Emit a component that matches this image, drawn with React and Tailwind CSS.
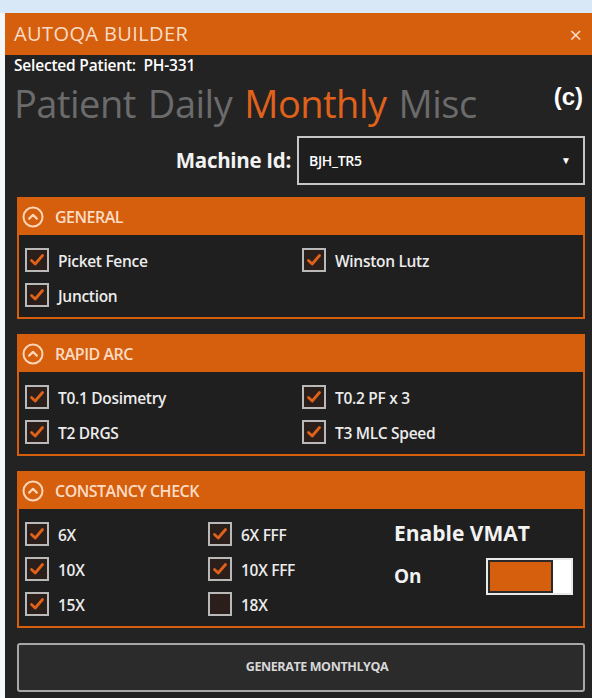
import React from "react";

const ORANGE = "bg-[#d65f0e]";

// small up-chevron in a ring, used on each group header
function CollapseIcon() {
  return (
    <svg width="22" height="22" viewBox="0 0 22 22" className="shrink-0">
      <circle cx="11" cy="11" r="9.5" fill="none" stroke="#fcd6b6" strokeWidth="2" />
      <path d="M7.2 12.6 L11 8.8 L14.8 12.6" fill="none" stroke="#fcd6b6" strokeWidth="2.2" strokeLinecap="round" strokeLinejoin="round" />
    </svg>
  );
}

function CheckBox({ label, checked = true }) {
  return (
    <div className="flex items-center h-[35px]">
      <div className="w-[24px] h-[24px] border-2 border-[#b9b9b9] bg-[#2a1f1a] flex items-center justify-center shrink-0">
        {checked && (
          <svg width="16" height="16" viewBox="0 0 16 16">
            <path d="M2.5 8.5 L6.2 12 L13.5 3.5" fill="none" stroke="#e0621a" strokeWidth="2.8" strokeLinecap="round" strokeLinejoin="round" />
          </svg>
        )}
      </div>
      <span className="ml-[9px] pt-[3px] text-[15.5px] font-semibold text-[#ececec] leading-[20px] tracking-[-0.3px]">{label}</span>
    </div>
  );
}

function Group({ title, children }) {
  return (
    <div className="border-2 border-[#d65f0e] bg-[#1f1f1f]">
      <div className={`${ORANGE} h-[36px] flex items-center gap-[11px] pl-[3px]`}>
        <CollapseIcon />
        <span className="text-[16px] text-[#fcdcc4] font-semibold tracking-[-0.5px]">{title}</span>
      </div>
      <div className="pt-[7px] pb-[5px] pl-[6px]">{children}</div>
    </div>
  );
}

export default function App() {
  return (
    <div
      className="w-[592px] h-[698px] flex flex-col overflow-hidden bg-[#f3f7fb]"
      style={{ fontFamily: '"Open Sans", "Noto Sans", sans-serif' }}
    >
      <div className="h-[13px] bg-[#d8e8f7] shrink-0" />
      <div className="flex flex-1 min-h-0">
        <div className="w-[5px] bg-[#f5f8fb] shrink-0" />
        <div className="flex-1 flex flex-col bg-[#232323]">
          {/* title bar */}
          <div className={`${ORANGE} h-[42px] shrink-0 flex items-center justify-between pl-[9px] pr-[10px]`}>
            <span className="text-[20px] text-[#f9dcc6] tracking-[0.4px]">AUTOQA BUILDER</span>
            <span className="text-[22px] text-[#f9dcc6] leading-none">×</span>
          </div>

          <div className="pl-[12px] pr-[7px]">
            <div className="-ml-[3px] pt-[1px] text-[15.5px] text-white font-semibold leading-[19px] tracking-[-0.2px]">
              Selected Patient:&nbsp; PH-331
            </div>

            <div className="-ml-[3px] flex justify-between items-start h-[61px]">
              <div className="text-[38px] leading-[46px] tracking-[-0.5px] text-[#6b6b6b] flex gap-[12px] pt-[5px]">
                <span>Patient</span>
                <span>Daily</span>
                <span className="text-[#e0621a]">Monthly</span>
                <span>Misc</span>
              </div>
              <span
                className="text-[24px] font-bold text-white pt-[4px] pr-[2px]"
                style={{ fontFamily: '"Liberation Sans", Arial, sans-serif' }}
              >
                (c)
              </span>
            </div>

            <div className="flex justify-end items-center gap-[6px]">
              <span className="text-[20.5px] font-bold text-[#f2f2f2] tracking-[-0.3px]">Machine Id:</span>
              <div className="w-[288px] h-[49px] border-2 border-[#c6c6c6] bg-[#1e1e1e] flex items-center justify-between pl-[10px] pr-[12px]">
                <span className="text-[14px] font-semibold text-white tracking-[-0.3px]">BJH_TR5</span>
                <span className="text-[10px] text-white">▼</span>
              </div>
            </div>

            <div className="mt-[12px] flex flex-col gap-[15px]">
              <Group title="GENERAL">
                <div className="grid grid-cols-[277px_1fr]">
                  <CheckBox label="Picket Fence" />
                  <CheckBox label="Winston Lutz" />
                  <CheckBox label="Junction" />
                </div>
              </Group>

              <Group title="RAPID ARC">
                <div className="grid grid-cols-[277px_1fr]">
                  <CheckBox label="T0.1 Dosimetry" />
                  <CheckBox label="T0.2 PF x 3" />
                  <CheckBox label="T2 DRGS" />
                  <CheckBox label="T3 MLC Speed" />
                </div>
              </Group>

              <Group title="CONSTANCY CHECK">
                <div className="grid grid-cols-[183px_186px_1fr]">
                  <div>
                    <CheckBox label="6X" />
                    <CheckBox label="10X" />
                    <CheckBox label="15X" />
                  </div>
                  <div>
                    <CheckBox label="6X FFF" />
                    <CheckBox label="10X FFF" />
                    <CheckBox label="18X" checked={false} />
                  </div>
                  <div className="flex flex-col">
                    <span className="text-[21px] font-bold text-[#f2f2f2] leading-[30px] pt-[2px]">Enable VMAT</span>
                    <div className="flex items-center mt-[10px]">
                      <span className="w-[92px] text-[19px] font-bold text-[#f2f2f2]">On</span>
                      <div className="w-[87px] h-[37px] border-2 border-[#e9e9e9] bg-[#e9e9e9] flex">
                        <div className="flex-1 bg-[#d65f0e] border-2 border-[#2a2a2a]" />
                        <div className="w-[18px] bg-white" />
                      </div>
                    </div>
                  </div>
                </div>
              </Group>
            </div>

            <button className="mt-[15px] w-full h-[49px] border-2 border-[#a8a8a8] rounded-[3px] bg-[#2b2b2b] pl-[32px] text-[12.5px] font-bold text-[#d8d8d8] tracking-[-0.4px]">
              GENERATE MONTHLYQA
            </button>
          </div>
        </div>
      </div>
    </div>
  );
}
